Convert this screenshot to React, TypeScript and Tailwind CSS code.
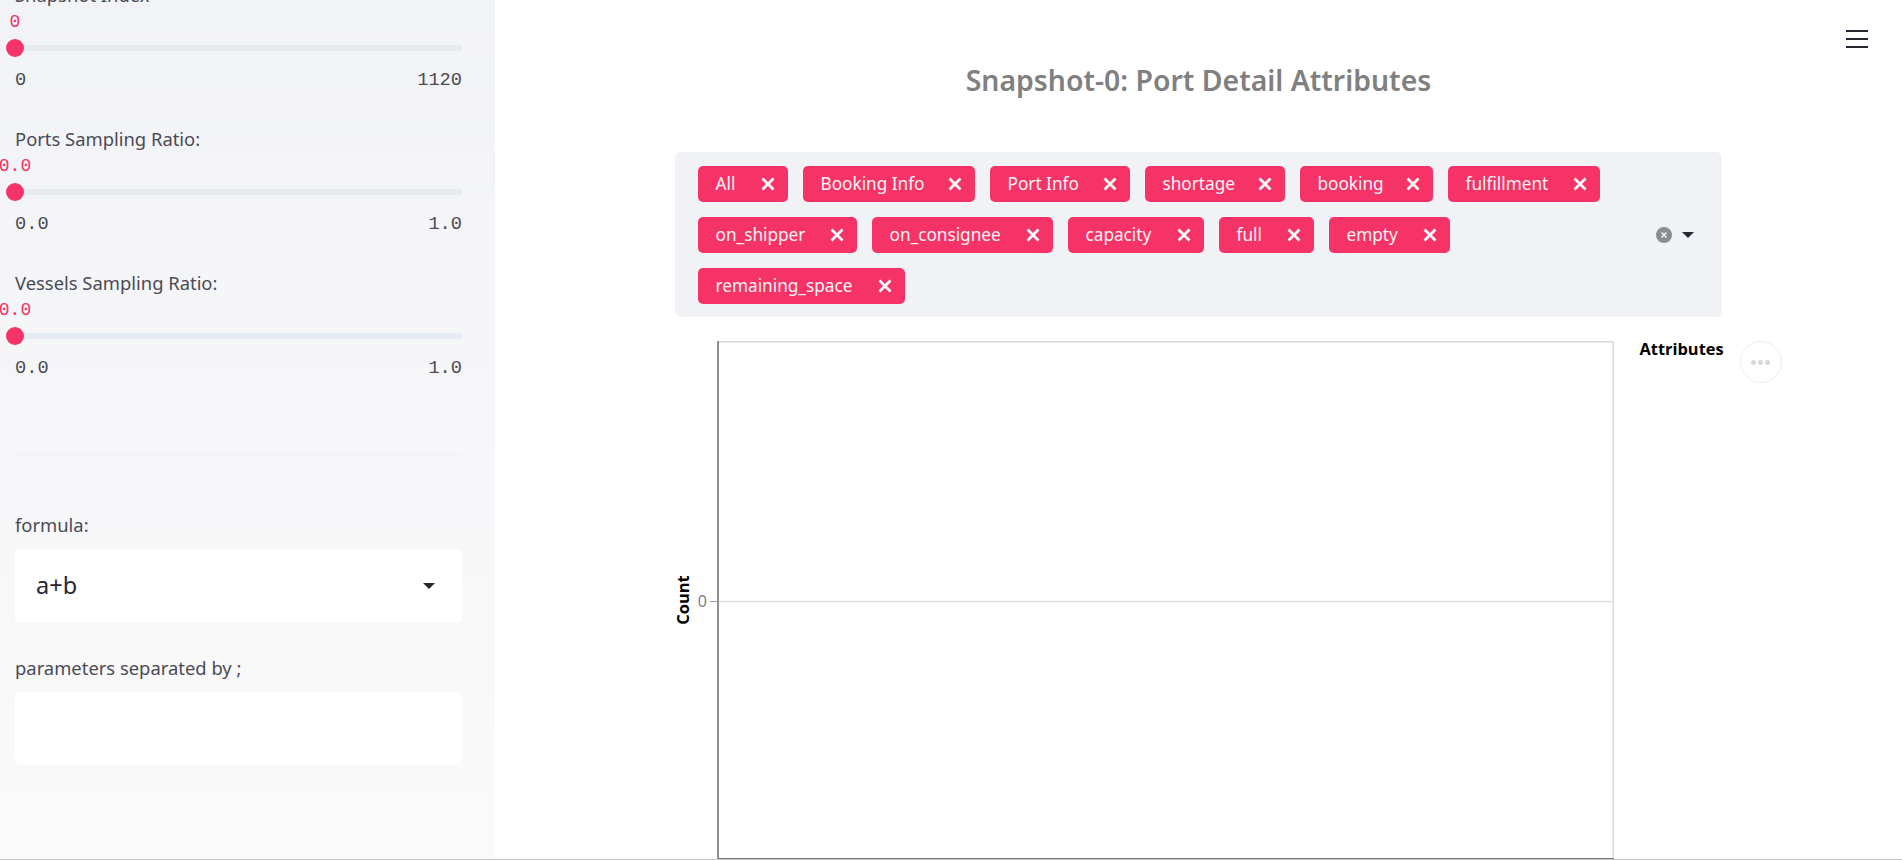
const sans = 'font-["Noto_Sans",sans-serif]';

const tags = [
  { label: 'All', w: 'w-[90px]' },
  { label: 'Booking Info', w: 'w-[172px]' },
  { label: 'Port Info', w: 'w-[140px]' },
  { label: 'shortage', w: 'w-[140px]' },
  { label: 'booking', w: 'w-[133px]' },
  { label: 'fulfillment', w: 'w-[152px]' },
  { label: 'on_shipper', w: 'w-[159px]' },
  { label: 'on_consignee', w: 'w-[181px]' },
  { label: 'capacity', w: 'w-[136px]' },
  { label: 'full', w: 'w-[95px]' },
  { label: 'empty', w: 'w-[121px]' },
  { label: 'remaining_space', w: 'w-[207px]' },
];

function Slider({ label, value, min, max }: { label: string; value: string; min: string; max: string }) {
  return (
    <div className="h-[144px] shrink-0">
      <div className="h-[27px] text-[18.4px] leading-[27px] text-[#4a4b55]">{label}</div>
      <div className="relative mt-[37px] h-[6px] rounded-[3px] bg-[#e6eaf1]">
        <div className="absolute left-[-9px] top-[-6px] size-[18px] rounded-full bg-[#f63366]" />
        <div className="absolute left-[-30px] top-[-35px] w-[60px] text-center font-['Liberation_Mono',monospace] text-[18px] leading-[24px] text-[#f63366]">
          {value}
        </div>
      </div>
      <div className="mt-[16px] flex justify-between font-['Liberation_Mono',monospace] text-[18.67px] leading-[26px] text-[#4a4b55]">
        <span>{min}</span>
        <span>{max}</span>
      </div>
    </div>
  );
}

function Tag({ label, w }: { label: string; w: string }) {
  return (
    <div className={`flex h-[36px] items-center justify-between rounded-[5px] bg-[#f63366] pl-[18px] pr-[12px] text-[17.2px] text-[#fff3f6] ${w}`}>
      <span>{label}</span>
      <svg width="16" height="16" viewBox="0 0 16 16" fill="none" stroke="#ffffff" strokeWidth="2.7">
        <path d="M2.5 2.5 13.5 13.5M13.5 2.5 2.5 13.5" />
      </svg>
    </div>
  );
}

export default function App() {
  return (
    <div className={`flex h-[860px] overflow-hidden border-b border-[#c8c8c8] bg-white ${sans}`}>
      {/* SIDEBAR */}
      <aside className="flex h-full w-[495px] shrink-0 flex-col bg-gradient-to-b from-[#f2f3f7] to-[#fafafa] pl-[15px] pr-[33px]">
        <div className="mt-[-19px]">
          <Slider label="Snapshot Index" value="0" min="0" max="1120" />
          <Slider label="Ports Sampling Ratio:" value="0.0" min="0.0" max="1.0" />
          <Slider label="Vessels Sampling Ratio:" value="0.0" min="0.0" max="1.0" />
        </div>

        <hr className="mt-[41px] w-[447px] border-t border-[#eff0f3]" />

        <div className="mt-[56px] h-[27px] text-[18.4px] leading-[27px] text-[#4a4b55]">formula:</div>
        <div className="mt-[11px] flex h-[74px] w-[447px] items-center justify-between rounded-[5px] bg-white pl-[21px] pr-[27px] text-[23.5px] text-[#262730]">
          <span>a+b</span>
          <div className="h-0 w-0 border-x-[6px] border-t-[6px] border-x-transparent border-t-[#262730]" />
        </div>

        <div className="mt-[31px] h-[27px] text-[18.4px] leading-[27px] text-[#4a4b55]">parameters separated by ;</div>
        <div className="mt-[11px] h-[73px] w-[447px] rounded-[5px] bg-white" />
      </aside>

      {/* MAIN */}
      <main className="relative min-w-0 flex-1">
        <div className="absolute right-[34px] top-[30px] flex w-[22px] flex-col gap-[6px]">
          <div className="h-[2px] bg-[#262730]" />
          <div className="h-[2px] bg-[#262730]" />
          <div className="h-[2px] bg-[#262730]" />
        </div>

        <div className="mx-auto w-[1048px] pt-[60px]">
          <h1 className="h-[40px] text-center text-[28.4px] font-semibold leading-[40px] text-[#808080]">
            Snapshot-0: Port Detail Attributes
          </h1>

          <div className="mt-[52px] flex h-[165px] w-[1047px] rounded-[6px] bg-[#f0f2f6] pl-[23px] pt-[14px]">
            <div className="flex w-[958px] flex-wrap content-start gap-[15px]">
              {tags.map((t) => (
                <Tag key={t.label} label={t.label} w={t.w} />
              ))}
            </div>
            <div className="flex h-[137px] items-center gap-[10px]">
              <div className="flex size-[16px] items-center justify-center rounded-full bg-[#8c8d93]">
                <svg width="8" height="8" viewBox="0 0 8 8" fill="none" stroke="#f0f2f6" strokeWidth="1.5">
                  <path d="M1.5 1.5 6.5 6.5M6.5 1.5 1.5 6.5" />
                </svg>
              </div>
              <div className="h-0 w-0 border-x-[6px] border-t-[6px] border-x-transparent border-t-[#262730]" />
            </div>
          </div>

          <div className="mt-[24px] flex">
            <svg width="939" height="519" viewBox="0 0 939 519" className="shrink-0">
              <rect x="43" y="0.75" width="895.25" height="518" fill="#fff" stroke="#dadada" strokeWidth="1.5" />
              <path d="M43 260.5H939" stroke="#dddddd" strokeWidth="1.3" />
              <path d="M35 260.5H43" stroke="#999999" />
              <path d="M43 0V519" stroke="#909090" strokeWidth="2" />
              <path d="M43 518H939" stroke="#777777" strokeWidth="2" />
              <text x="32" y="265.5" textAnchor="end" fontSize="16" fill="#777777" fontFamily="Open Sans">0</text>
              <text
                x="0"
                y="0"
                transform="translate(14 259) rotate(-90)"
                textAnchor="middle"
                fontSize="16.5"
                fontWeight="700"
                fill="#000000"
                fontFamily="Open Sans"
              >
                Count
              </text>
            </svg>
            <div className="ml-[26px] h-[24px] font-['Open_Sans',sans-serif] text-[16.4px] font-bold leading-[16px] text-black">
              Attributes
            </div>
            <div className="ml-[16px] flex size-[42px] shrink-0 items-center justify-center gap-[2px] rounded-full border border-[#eeeeee] bg-white">
              <div className="size-[5px] rounded-full bg-[#d8d8d8]" />
              <div className="size-[5px] rounded-full bg-[#d8d8d8]" />
              <div className="size-[5px] rounded-full bg-[#d8d8d8]" />
            </div>
          </div>
        </div>
      </main>
    </div>
  );
}
